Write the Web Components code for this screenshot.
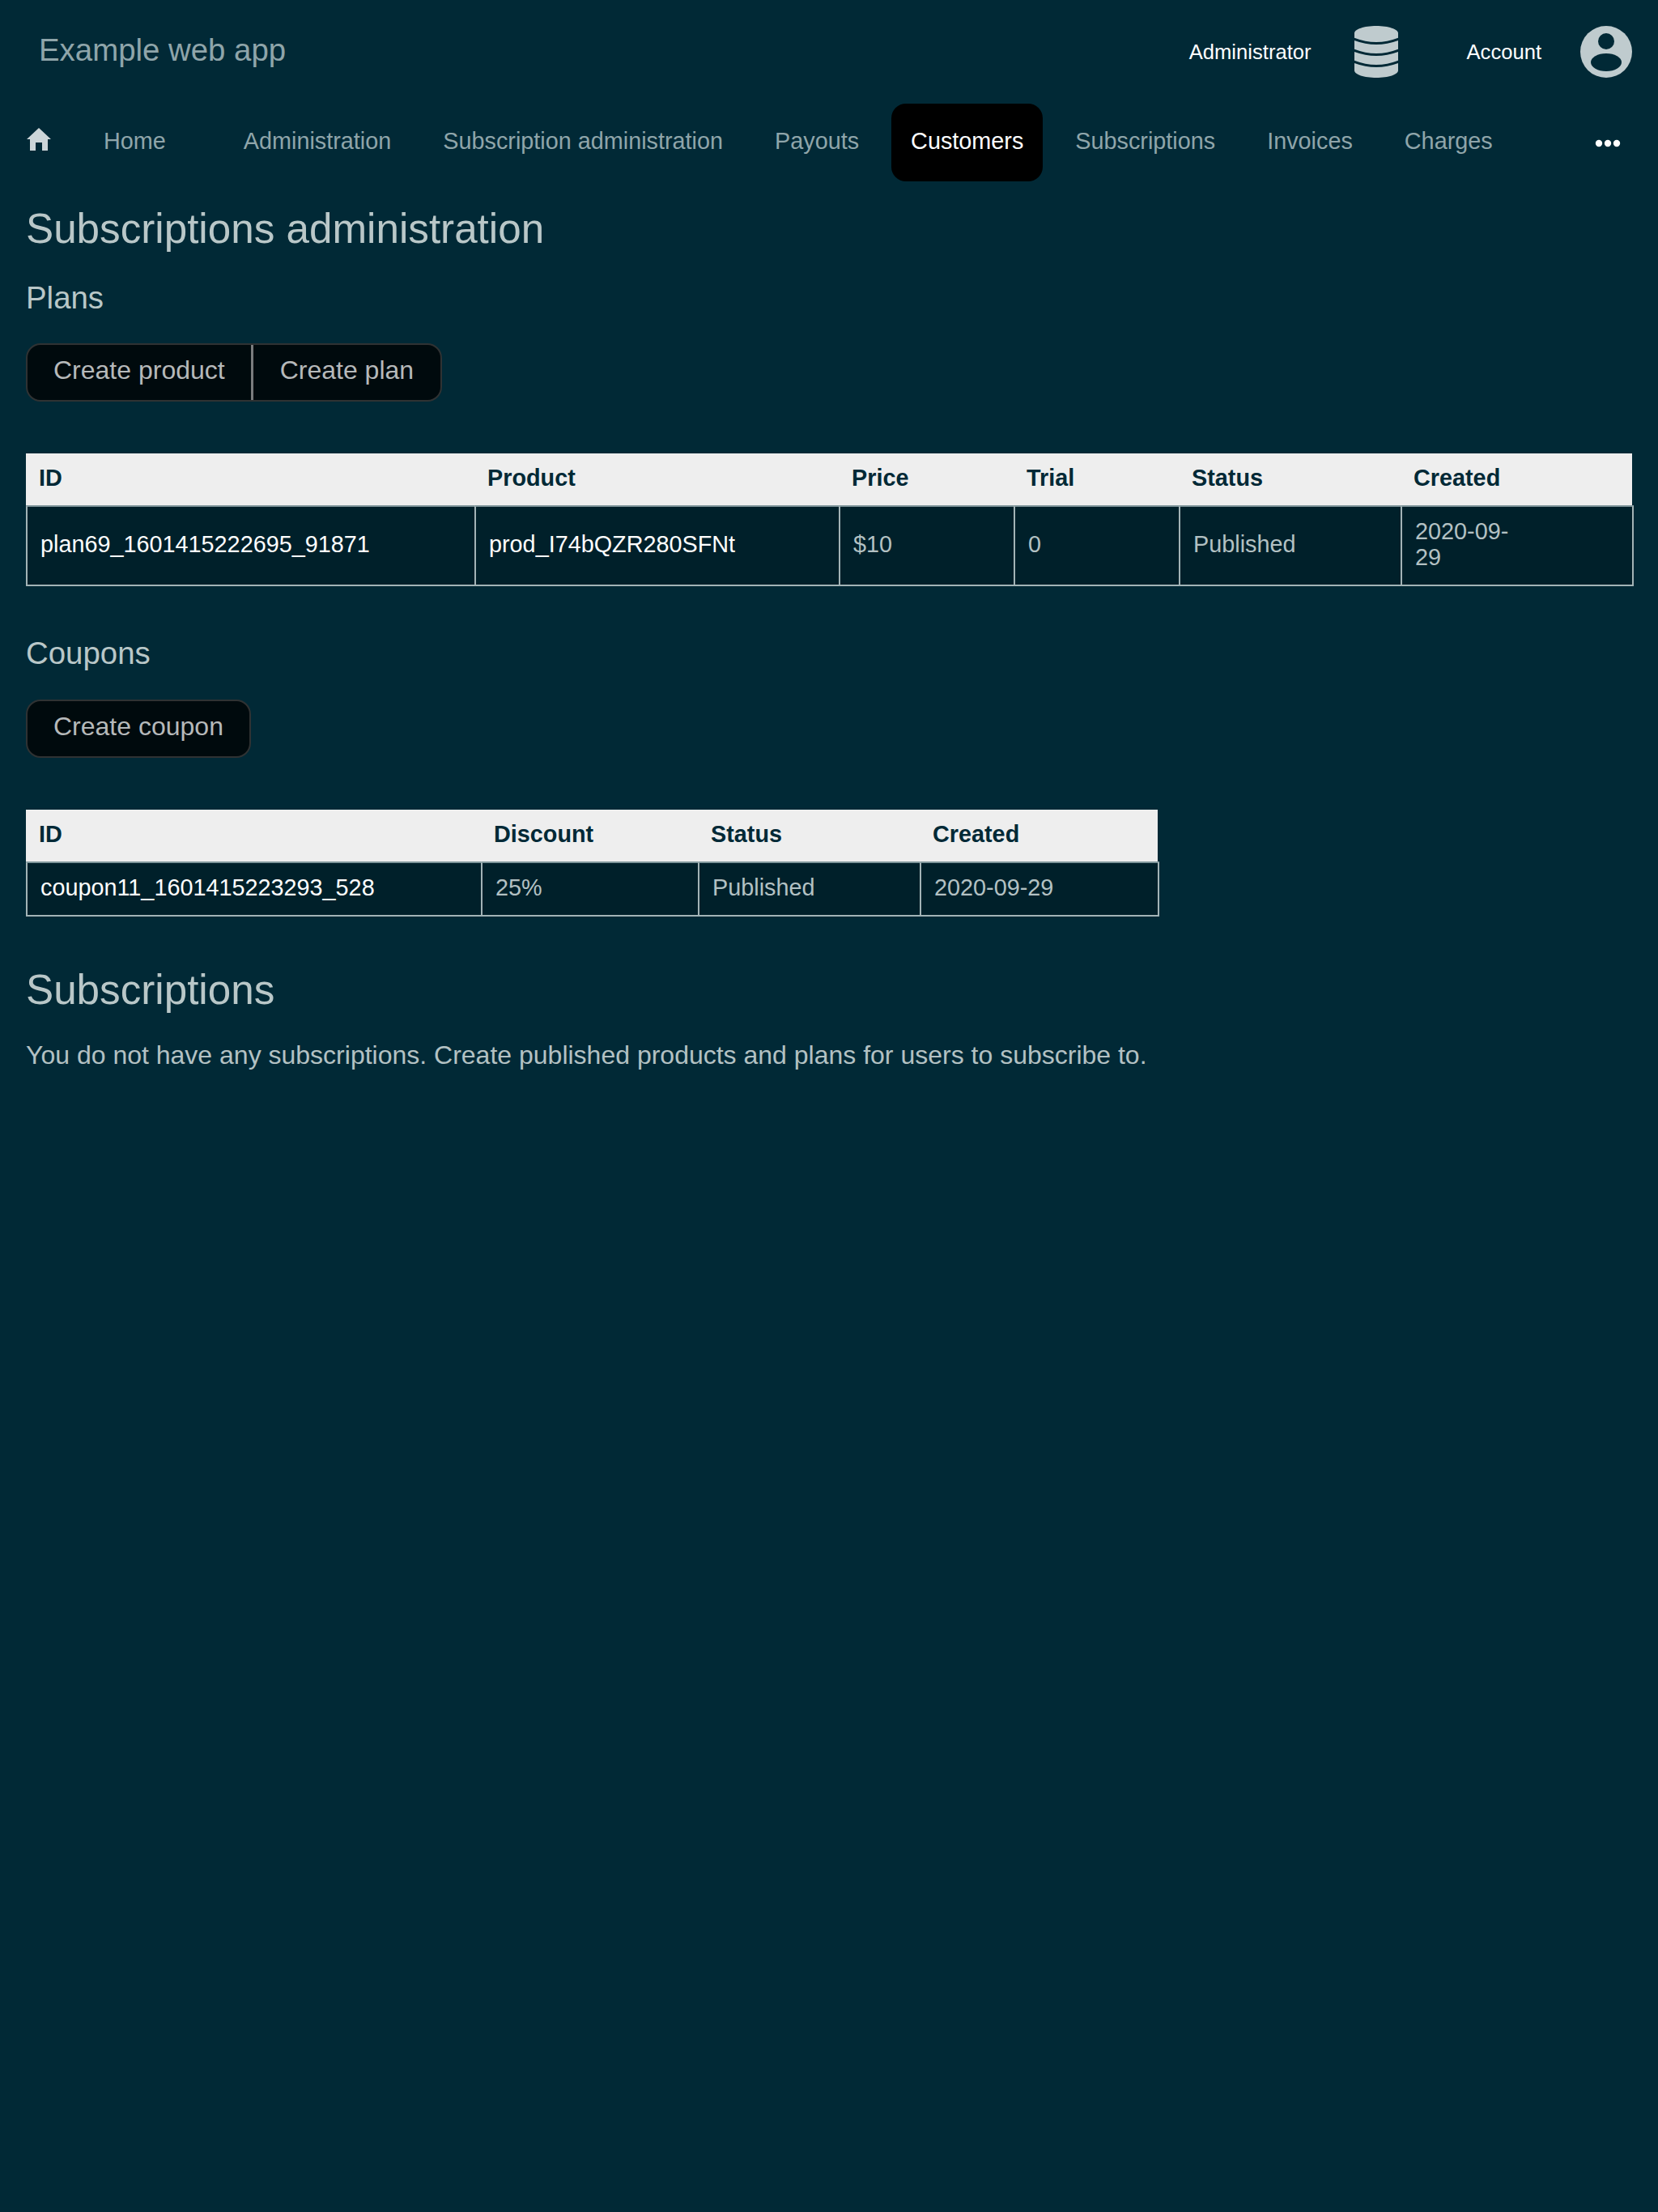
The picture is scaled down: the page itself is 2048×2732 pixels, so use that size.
<!DOCTYPE html>
<html>
<head>
<meta charset="utf-8">
<title>Subscriptions administration</title>
<style>
  html, body {
    margin: 0;
    background: #012936;
    min-height: 2732px;
    font-family: "Liberation Sans", Arial, sans-serif;
  }
</style>
</head>
<body>
  <top-bar brand="Example web app">
    <top-link slot="links" gap="53">Administrator</top-link>
    <svg-icon slot="links" name="database" gap="85"></svg-icon>
    <top-link slot="links" gap="48">Account</top-link>
    <svg-icon slot="links" name="person"></svg-icon>
  </top-bar>

  <main-nav>
    <svg-icon name="home" gap="24"></svg-icon>
    <nav-link gap="32">Home</nav-link>
    <nav-link>Administration</nav-link>
    <nav-link>Subscription administration</nav-link>
    <nav-link>Payouts</nav-link>
    <nav-link active>Customers</nav-link>
    <nav-link>Subscriptions</nav-link>
    <nav-link>Invoices</nav-link>
    <nav-link>Charges</nav-link>
    <svg-icon slot="end" name="dots"></svg-icon>
  </main-nav>

  <page-content>
    <page-heading level="1" top="29">Subscriptions administration</page-heading>
    <page-heading level="2" top="33">Plans</page-heading>
    <button-group top="34">
      <action-button>Create product</action-button>
      <action-button>Create plan</action-button>
    </button-group>
    <data-table top="64" columns="554 450 216 204 274 288">
      <table-head>ID</table-head>
      <table-head>Product</table-head>
      <table-head>Price</table-head>
      <table-head>Trial</table-head>
      <table-head>Status</table-head>
      <table-head last>Created</table-head>
      <table-cell strong>plan69_1601415222695_91871</table-cell>
      <table-cell strong>prod_I74bQZR280SFNt</table-cell>
      <table-cell>$10</table-cell>
      <table-cell>0</table-cell>
      <table-cell>Published</table-cell>
      <table-cell last narrow>2020-09-29</table-cell>
    </data-table>

    <page-heading level="2" top="61">Coupons</page-heading>
    <button-group top="35">
      <action-button>Create coupon</action-button>
    </button-group>
    <data-table top="64" columns="562 268 274 296">
      <table-head>ID</table-head>
      <table-head>Discount</table-head>
      <table-head>Status</table-head>
      <table-head last>Created</table-head>
      <table-cell strong>coupon11_1601415223293_528</table-cell>
      <table-cell>25%</table-cell>
      <table-cell>Published</table-cell>
      <table-cell last>2020-09-29</table-cell>
    </data-table>

    <page-heading level="1" top="61">Subscriptions</page-heading>
    <page-text top="30">You do not have any subscriptions. Create published products and plans for users to subscribe to.</page-text>
  </page-content>

<script>
  const ICONS = {
    database: `<svg width="54" height="64" viewBox="0 0 54 64">
        <path fill="#bfcbce" d="M0 9C0 4 12 0 27 0S54 4 54 9V55C54 60 42 64 27 64S0 60 0 55Z"/>
        <g fill="none" stroke="#012936" stroke-width="3">
          <path d="M-1 16Q27 27 55 16"/>
          <path d="M-1 30Q27 41 55 30"/>
          <path d="M-1 44Q27 55 55 44"/>
        </g>
      </svg>`,
    person: `<svg width="64" height="64" viewBox="0 0 64 64">
        <circle cx="32" cy="32" r="32" fill="#bfcbce"/>
        <circle cx="32" cy="19" r="10" fill="#012936"/>
        <ellipse cx="32" cy="45" rx="19" ry="11" fill="#012936"/>
      </svg>`,
    home: `<svg width="32" height="32" viewBox="0 0 32 32">
        <path fill="#ccd5d8" d="M16 2L31 16H27V30H20V20H12V30H5V16H1Z"/>
      </svg>`,
    dots: `<svg width="46" height="10" viewBox="0 0 46 10">
        <circle cx="12" cy="5" r="4.2" fill="#fff"/>
        <circle cx="23" cy="5" r="4.2" fill="#fff"/>
        <circle cx="34" cy="5" r="4.2" fill="#fff"/>
      </svg>`
  };

  // every element is the same: a template string put in an open shadow root
  class BaseElement extends HTMLElement {
    constructor() {
      super();
      this.attachShadow({mode: 'open'}).innerHTML = this.template();
    }

    connectedCallback() {
      if (this.hasAttribute('top')) this.style.marginTop = this.getAttribute('top') + 'px';
      if (this.hasAttribute('gap')) this.style.marginRight = this.getAttribute('gap') + 'px';
    }
  }

  class TopBar extends BaseElement {
    template() {
      return `
        <style>
          :host {
            display: flex;
            align-items: center;
            justify-content: space-between;
            height: 128px;
            padding: 0 32px 0 48px;
            box-sizing: border-box;
          }
          #brand {
            font-size: 38.4px;
            color: #8fa5aa;
            padding-bottom: 4px;
          }
          #links {
            display: flex;
            align-items: center;
          }
        </style>
        <div id="brand">${this.getAttribute('brand')}</div>
        <div id="links"><slot name="links"></slot></div>
      `;
    }
  }

  class TopLink extends BaseElement {
    template() {
      return `
        <style>
          :host {
            display: block;
            font-size: 25.6px;
            color: #fff;
          }
        </style>
        <slot></slot>
      `;
    }
  }

  class SvgIcon extends BaseElement {
    template() {
      return `
        <style>
          :host {
            display: flex;
            align-items: center;
          }
          :host([name="home"]) { padding-bottom: 8px; }
          :host([name="dots"]) { padding-right: 7px; }
          svg { display: block; }
        </style>
        ${ICONS[this.getAttribute('name')]}
      `;
    }
  }

  class MainNav extends BaseElement {
    template() {
      return `
        <style>
          :host {
            display: flex;
            align-items: center;
            height: 96px;
            padding: 0 32px;
            box-sizing: border-box;
          }
          #items {
            display: flex;
            align-items: center;
            gap: 16px;
          }
          #end {
            margin-left: auto;
            padding-top: 2px;
          }
        </style>
        <div id="items"><slot></slot></div>
        <div id="end"><slot name="end"></slot></div>
      `;
    }
  }

  class NavLink extends BaseElement {
    template() {
      return `
        <style>
          :host {
            display: flex;
            align-items: center;
            height: 96px;
            box-sizing: border-box;
            padding: 0 24px 4px;
            border-radius: 18px;
            font-size: 28.8px;
            color: #8fa5aa;
          }
          :host([active]) {
            background: #000;
            color: #fff;
          }
        </style>
        <slot></slot>
      `;
    }
  }

  class PageContent extends BaseElement {
    template() {
      return `
        <style>
          :host {
            display: block;
            padding: 0 32px;
          }
        </style>
        <slot></slot>
      `;
    }
  }

  class PageHeading extends BaseElement {
    template() {
      const big = this.getAttribute('level') === '1';
      return `
        <style>
          :host {
            display: block;
            font-size: ${big ? 51.2 : 38.4}px;
            line-height: ${big ? 60 : 44}px;
            color: #b9c7c8;
          }
        </style>
        <slot></slot>
      `;
    }
  }

  class PageText extends BaseElement {
    template() {
      return `
        <style>
          :host {
            display: block;
            font-size: 32px;
            line-height: 40px;
            color: #b3c1c3;
          }
        </style>
        <slot></slot>
      `;
    }
  }

  class ButtonGroup extends BaseElement {
    template() {
      return `
        <style>
          :host {
            display: flex;
            width: fit-content;
            height: 72px;
            box-sizing: border-box;
            background: #000a0d;
            border: 2px solid #2f3233;
            border-radius: 18px;
          }
          ::slotted(action-button:not(:last-child)) {
            border-right: 3px solid #7a7c7d;
          }
          ::slotted(action-button:not(:first-child)) {
            padding-left: 33px;
            padding-right: 33px;
          }
        </style>
        <slot></slot>
      `;
    }
  }

  class ActionButton extends BaseElement {
    template() {
      return `
        <style>
          :host {
            display: block;
            padding: 11px 32px 0;
            font-size: 32px;
            line-height: 40px;
            color: #b6b9ba;
          }
        </style>
        <slot></slot>
      `;
    }
  }

  class DataTable extends BaseElement {
    template() {
      const cols = this.getAttribute('columns').split(' ').map(w => w + 'px').join(' ');
      return `
        <style>
          :host {
            display: grid;
            grid-template-columns: ${cols};
            width: fit-content;
            font-size: 28.8px;
            line-height: 32px;
          }
        </style>
        <slot></slot>
      `;
    }
  }

  class TableHead extends BaseElement {
    template() {
      return `
        <style>
          :host {
            display: block;
            padding: 14px 16px 18px;
            background: #eeeeee;
            color: #012936;
            font-weight: bold;
          }
          :host([last]) { margin-right: 2px; }
        </style>
        <slot></slot>
      `;
    }
  }

  class TableCell extends BaseElement {
    template() {
      return `
        <style>
          :host {
            display: flex;
            align-items: center;
            padding: 14px 16px 18px;
            background: #00202a;
            color: #b3c1c3;
            border-left: 2px solid #a3b3b6;
            border-top: 2px solid #7f959a;
            border-bottom: 2px solid #a3b3b6;
          }
          :host([strong]) { color: #fff; }
          :host([last]) { border-right: 2px solid #a3b3b6; }
          :host([narrow]) { padding-right: 140px; }
        </style>
        <div><slot></slot></div>
      `;
    }
  }

  customElements.define('top-bar', TopBar);
  customElements.define('top-link', TopLink);
  customElements.define('svg-icon', SvgIcon);
  customElements.define('main-nav', MainNav);
  customElements.define('nav-link', NavLink);
  customElements.define('page-content', PageContent);
  customElements.define('page-heading', PageHeading);
  customElements.define('page-text', PageText);
  customElements.define('button-group', ButtonGroup);
  customElements.define('action-button', ActionButton);
  customElements.define('data-table', DataTable);
  customElements.define('table-head', TableHead);
  customElements.define('table-cell', TableCell);
</script>
</body>
</html>
